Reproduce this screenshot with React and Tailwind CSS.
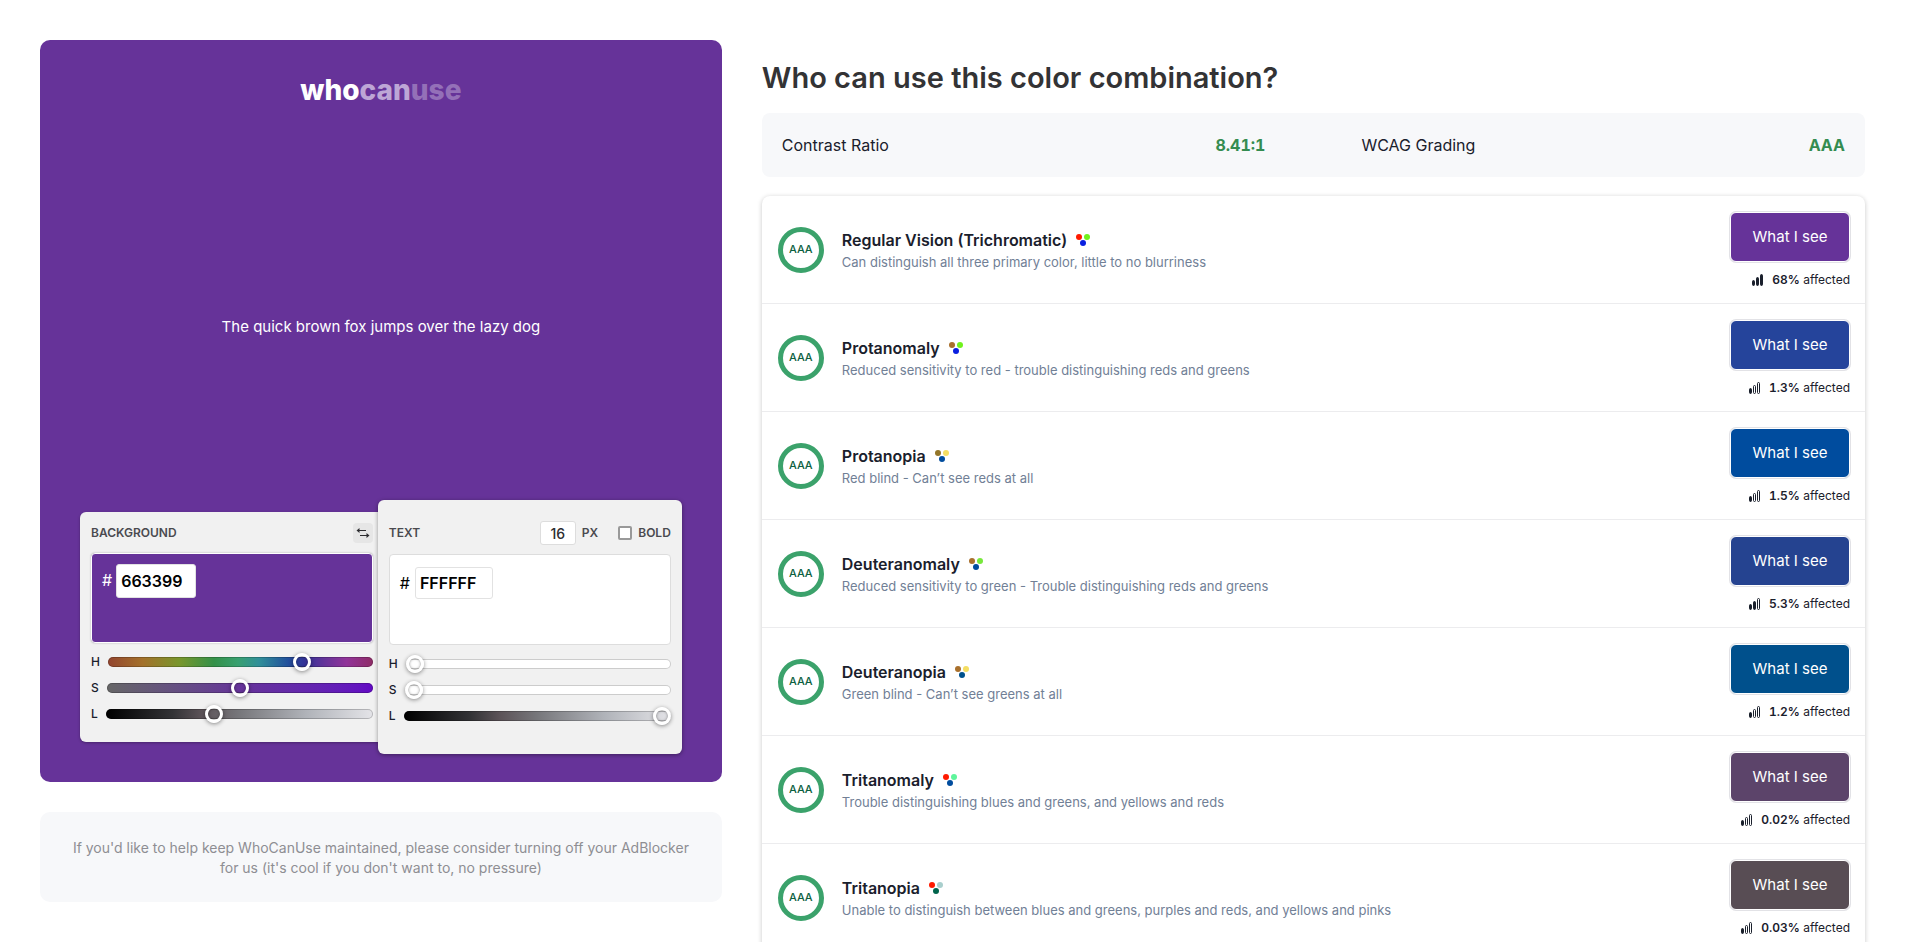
const VISIONS = [
  { name: 'Regular Vision (Trichromatic)', text: 'Can distinguish all three primary color, little to no blurriness', dots: ['#ff1a00', '#70f21c', '#0a1fe0'], button: 'bg-[#663399]', share: '68%', level: 3 },
  { name: 'Protanomaly', text: 'Reduced sensitivity to red - trouble distinguishing reds and greens', dots: ['#a9702c', '#70f21c', '#0a1fe0'], button: 'bg-[#25449b]', share: '1.3%', level: 1 },
  { name: 'Protanopia', text: 'Red blind - Can’t see reds at all', dots: ['#937629', '#f5de62', '#004c9e'], button: 'bg-[#004c9e]', share: '1.5%', level: 1 },
  { name: 'Deuteranomaly', text: 'Reduced sensitivity to green - Trouble distinguishing reds and greens', dots: ['#a9702c', '#78e83c', '#004c9e'], button: 'bg-[#254390]', share: '5.3%', level: 2 },
  { name: 'Deuteranopia', text: 'Green blind - Can’t see greens at all', dots: ['#a9702c', '#f5de62', '#00508c'], button: 'bg-[#00508c]', share: '1.2%', level: 1 },
  { name: 'Tritanomaly', text: 'Trouble distinguishing blues and greens, and yellows and reds', dots: ['#ff1a00', '#5ef59b', '#004c9e'], button: 'bg-[#5c446a]', share: '0.02%', level: 1 },
  { name: 'Tritanopia', text: 'Unable to distinguish between blues and greens, purples and reds, and yellows and pinks', dots: ['#ff1a00', '#a9cfcd', '#00644c'], button: 'bg-[#584d54]', share: '0.03%', level: 1 },
];

function Dots({ colors }) {
  return (
    <svg width="14" height="12" viewBox="0 0 14 12" aria-hidden="true">
      <circle cx="3" cy="3" r="3" fill={colors[0]} />
      <circle cx="11" cy="3" r="3" fill={colors[1]} />
      <circle cx="7" cy="9" r="3" fill={colors[2]} />
    </svg>
  );
}

function Bars({ level }) {
  const bars = [
    { x: 0.5, y: 6.5, h: 5 },
    { x: 4.5, y: 3.5, h: 8 },
    { x: 8.5, y: 0.5, h: 11 },
  ];
  return (
    <svg width="12" height="12" viewBox="0 0 12 12" stroke="#1a202c" strokeWidth="1" aria-hidden="true">
      {bars.map((b, i) => (
        <rect key={b.x} x={b.x} y={b.y} width="2" height={b.h} rx="1" fill={i < level ? '#1a202c' : 'none'} />
      ))}
    </svg>
  );
}

function Slider({ id, letter, value, max, track }) {
  return (
    <div className="flex h-[26px] items-center gap-2">
      <label htmlFor={id} className="text-xs font-medium text-[#1a202c]">{letter}</label>
      <input
        id={id}
        type="range"
        min="0"
        max={max}
        defaultValue={value}
        className={`h-[10px] min-w-0 flex-1 appearance-none rounded-full shadow-[inset_0_0_0_1px_rgba(0,0,0,0.2)] [&::-webkit-slider-thumb]:size-[18px] [&::-webkit-slider-thumb]:appearance-none [&::-webkit-slider-thumb]:rounded-full [&::-webkit-slider-thumb]:border-[3px] [&::-webkit-slider-thumb]:border-white [&::-webkit-slider-thumb]:bg-transparent [&::-webkit-slider-thumb]:shadow-[0_1px_4px_rgba(0,0,0,0.45),inset_0_0_3px_rgba(0,0,0,0.45)] ${track}`}
      />
    </div>
  );
}

const HUE = 'bg-[linear-gradient(90deg,#93452f,#a3702a_13%,#78962c_27%,#349149_40%,#38a070_49%,#308f99_57%,#22509c_68%,#333399_74%,#663399_82%,#913399_90%,#8f2c66)]';
const LIGHTNESS = 'bg-[linear-gradient(90deg,#000000,#333336_25%,#5c5358_36%,#77777b_50%,#b0b3b9_75%,#e4e4e8)]';

function BackgroundPicker() {
  return (
    <section className="my-3 flex-1 rounded-l-md bg-[#f1f1f1] pr-[5px] pl-[11px] shadow-[0_1px_3px_rgba(0,0,0,0.3)]">
      <div className="flex h-[41px] items-center justify-between">
        <h2 className="text-xs font-semibold text-[#4a4a4f]">BACKGROUND</h2>
        <button type="button" aria-label="Swap colors" className="flex size-5 items-center justify-center rounded bg-[#e6e6e6]">
          <svg width="14" height="10" viewBox="0 0 14 10" fill="none" stroke="#2d2d30" strokeWidth="1" aria-hidden="true">
            <path d="M3 2.5h7M4 7.5h7" />
            <path d="M0.5 2.5L3.5 0v5zM13.5 7.5L10.5 5v5z" fill="#2d2d30" stroke="none" />
          </svg>
        </button>
      </div>
      <div className="flex h-[90px] items-start gap-1 rounded border border-white bg-[#663399] px-[10px] pt-[10px] shadow-[0_0_2px_rgba(0,0,0,0.3)]">
        <label htmlFor="bg-hex" className="leading-8 text-white">#</label>
        <input id="bg-hex" defaultValue="663399" className="h-[34px] w-20 rounded-[3px] border border-[#e2e2e2] bg-white px-1 font-semibold text-black" />
      </div>
      <div className="mt-[6px]">
        <Slider id="bg-h" letter="H" value={270} max={360} track={HUE} />
        <Slider id="bg-s" letter="S" value={50} max={100} track="bg-linear-to-r from-[#666666] via-[#663399] to-[#6308c4]" />
        <Slider id="bg-l" letter="L" value={40} max={100} track={LIGHTNESS} />
      </div>
    </section>
  );
}

function TextPicker() {
  return (
    <section className="w-[304px] shrink-0 rounded-md bg-[#f1f1f1] px-[11px] pt-3 shadow-[0_1px_4px_rgba(0,0,0,0.4)]">
      <div className="flex h-[42px] items-center text-xs font-semibold text-[#4a4a4f]">
        <h2 className="flex-1">TEXT</h2>
        <input id="size" defaultValue="16" className="h-6 w-9 rounded-[3px] border border-[#dddddd] bg-white text-center text-sm font-medium text-[#2d2d30]" />
        <label htmlFor="size" className="ml-[6px]">PX</label>
        <input id="bold" type="checkbox" className="mr-[6px] ml-5 size-[14px] appearance-none rounded-[2px] border-2 border-[#999999] bg-white" />
        <label htmlFor="bold">BOLD</label>
      </div>
      <div className="flex h-[91px] items-start gap-[5px] rounded border border-[#dddddd] bg-white px-[10px] pt-3">
        <label htmlFor="text-hex" className="leading-8 text-black">#</label>
        <input id="text-hex" defaultValue="FFFFFF" className="h-8 w-[78px] rounded-[3px] border border-[#e2e2e2] bg-white px-1 font-semibold text-black" />
      </div>
      <div className="mt-[6px]">
        <Slider id="text-h" letter="H" value={0} max={360} track="bg-white" />
        <Slider id="text-s" letter="S" value={0} max={100} track="bg-white" />
        <Slider id="text-l" letter="L" value={100} max={100} track={LIGHTNESS} />
      </div>
    </section>
  );
}

export default function App() {
  return (
    <div className="h-screen overflow-hidden bg-white font-['Inter',sans-serif] text-[#1a202c]">
      <div className="grid grid-cols-[1fr_1.618fr] items-start gap-10 px-10">
        <div className="pt-10">
          <section className="flex h-[742px] flex-col rounded-[10px] bg-[#663399] px-10 pb-7 text-white">
            <h1 className="pt-8 text-center text-[28px] leading-9 font-extrabold">
              who<span className="text-[#bda6d6]">can</span><span className="text-[#9470b8]">use</span>
            </h1>
            <p className="mt-[207px] flex-1 text-center text-[15px] leading-6">The quick brown fox jumps over the lazy dog</p>
            <div className="flex h-[254px] items-stretch">
              <BackgroundPicker />
              <TextPicker />
            </div>
          </section>
          <aside className="mt-[30px] rounded-[10px] bg-[#f7f8fa] px-7 pt-[26px] pb-6 text-center text-sm leading-5 text-[#8e8e93]">
            If you'd like to help keep WhoCanUse maintained, please consider turning off your AdBlocker for us (it's cool if you don't want to, no pressure)
          </aside>
        </div>
        <main className="pt-[58px]">
          <h2 className="text-[29px] leading-10 font-semibold text-[#333335]">Who can use this color combination?</h2>
          <dl className="mt-[15px] grid h-16 grid-cols-2 items-center gap-24 rounded-lg bg-[#f7f8fa] px-5">
            <div className="flex justify-between">
              <dt>Contrast Ratio</dt>
              <dd className="font-bold text-[#348c50] tabular-nums">8.41:1</dd>
            </div>
            <div className="flex justify-between">
              <dt>WCAG Grading</dt>
              <dd className="font-bold text-[#348c50]">AAA</dd>
            </div>
          </dl>
          <ul className="mt-[19px] rounded-lg shadow-[0_1px_5px_rgba(0,0,0,0.22)]">
            {VISIONS.map((v) => (
              <li key={v.name} className="flex h-[108px] items-center border-b border-[#ececee] pr-[15px] pl-4">
                <div className="flex size-[46px] shrink-0 items-center justify-center rounded-full border-[5px] border-[#3ba26b] text-[11px] font-medium text-[#0b6040]">AAA</div>
                <div className="ml-[18px] flex-1">
                  <h3 className="flex items-center gap-[9px] leading-6 font-semibold">
                    {v.name}
                    <Dots colors={v.dots} />
                  </h3>
                  <p className="text-[13px] leading-5 text-[#718096]">{v.text}</p>
                </div>
                <div className="flex flex-col items-end pt-[2px]">
                  <button type="button" className={`h-[50px] w-[120px] rounded-md border border-white text-[15px] text-white shadow-[0_0_0_1px_#e2e2e6] ${v.button}`}>What I see</button>
                  <p className="mt-[9px] flex items-center text-xs leading-[18px]">
                    <Bars level={v.level} />
                    <span className="ml-2"><strong className="font-semibold tabular-nums">{v.share}</strong> affected</span>
                  </p>
                </div>
              </li>
            ))}
          </ul>
        </main>
      </div>
    </div>
  );
}
